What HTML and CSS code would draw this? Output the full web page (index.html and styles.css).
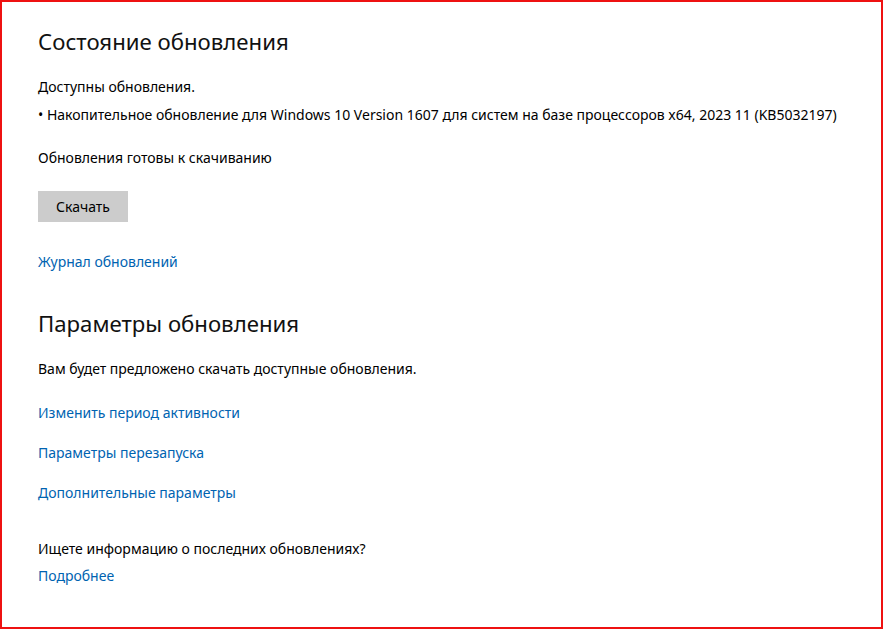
FILE: index.html
```html
<!DOCTYPE html>
<html lang="ru">
<head>
<meta charset="utf-8">
<title>Центр обновления Windows</title>
<link rel="stylesheet" href="styles.css">
</head>
<body>
<div class="frame">
  <section class="status">
    <h1 class="title">Состояние обновления</h1>
    <p class="text available">Доступны обновления.</p>
    <p class="text bullet">• Накопительное обновление для Windows 10 Version 1607 для систем на базе процессоров x64, 2023 11 (KB5032197)</p>
    <p class="text ready">Обновления готовы к скачиванию</p>
    <button class="btn" type="button">Скачать</button>
    <a class="link history" href="#">Журнал обновлений</a>
  </section>
  <section class="options">
    <h1 class="title title2">Параметры обновления</h1>
    <p class="text offer">Вам будет предложено скачать доступные обновления.</p>
    <a class="link first" href="#">Изменить период активности</a>
    <a class="link next" href="#">Параметры перезапуска</a>
    <a class="link next" href="#">Дополнительные параметры</a>
    <p class="text question">Ищете информацию о последних обновлениях?</p>
    <a class="link more" href="#">Подробнее</a>
  </section>
</div>
</body>
</html>
```

FILE: styles.css
```css
* { box-sizing: border-box; }
html, body {
  margin: 0;
  padding: 0;
  background: #ffffff;
}
body {
  font-family: "Noto Sans", "Open Sans", sans-serif;
  color: #000000;
}
.frame {
  width: 883px;
  height: 629px;
  border: 2px solid #ee1111;
  padding: 24px 36px 0 36px;
  display: flex;
  flex-direction: column;
  overflow: hidden;
}
.status, .options {
  display: flex;
  flex-direction: column;
  align-items: flex-start;
}
.title {
  margin: 0;
  font-size: 22.2px;
  line-height: 32px;
  font-weight: 400;
  color: #111111;
}
.title2 { margin-top: 36px; }
.text {
  margin: 0;
  font-size: 14px;
  line-height: 20px;
}
.available { margin-top: 19px; }
.bullet { margin-top: 8px; white-space: nowrap; }
.ready { margin-top: 23px; }
.btn {
  margin-top: 23px;
  width: 90px;
  height: 31px;
  border: none;
  background: #cccccc;
  font-family: inherit;
  font-size: 14px;
  line-height: 31px;
  padding: 0;
  color: #000000;
}
.link {
  display: block;
  font-size: 14px;
  line-height: 20px;
  color: #0063b1;
  text-decoration: none;
}
.history { margin-top: 30px; }
.offer { margin-top: 19px; }
.first { margin-top: 24px; }
.next { margin-top: 20px; }
.question { margin-top: 36px; }
.more { margin-top: 7px; }
```
